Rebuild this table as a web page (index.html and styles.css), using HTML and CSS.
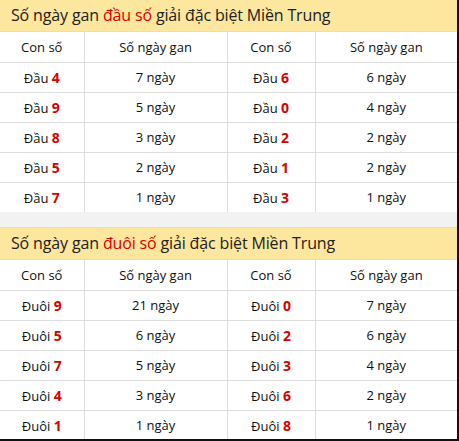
FILE: index.html
```html
<!DOCTYPE html>
<html lang="vi">
<head>
<meta charset="utf-8">
<link rel="stylesheet" href="styles.css">
</head>
<body>
<div class="wrap">
  <section class="block">
    <h2 class="title">Số ngày gan <span class="hl">đầu số</span> giải đặc biệt Miền Trung</h2>
    <table class="grid">
      <colgroup><col class="c1"><col class="c2"><col class="c3"><col class="c4"></colgroup>
      <tr class="head"><th>Con số</th><th>Số ngày gan</th><th>Con số</th><th>Số ngày gan</th></tr>
      <tr><td>Đầu <b>4</b></td><td>7 ngày</td><td>Đầu <b>6</b></td><td>6 ngày</td></tr>
      <tr><td>Đầu <b>9</b></td><td>5 ngày</td><td>Đầu <b>0</b></td><td>4 ngày</td></tr>
      <tr><td>Đầu <b>8</b></td><td>3 ngày</td><td>Đầu <b>2</b></td><td>2 ngày</td></tr>
      <tr><td>Đầu <b>5</b></td><td>2 ngày</td><td>Đầu <b>1</b></td><td>2 ngày</td></tr>
      <tr><td>Đầu <b>7</b></td><td>1 ngày</td><td>Đầu <b>3</b></td><td>1 ngày</td></tr>
    </table>
  </section>
  <div class="gap"></div>
  <section class="block">
    <h2 class="title">Số ngày gan <span class="hl">đuôi số</span> giải đặc biệt Miền Trung</h2>
    <table class="grid">
      <colgroup><col class="c1"><col class="c2"><col class="c3"><col class="c4"></colgroup>
      <tr class="head"><th>Con số</th><th>Số ngày gan</th><th>Con số</th><th>Số ngày gan</th></tr>
      <tr><td>Đuôi <b>9</b></td><td>21 ngày</td><td>Đuôi <b>0</b></td><td>7 ngày</td></tr>
      <tr><td>Đuôi <b>5</b></td><td>6 ngày</td><td>Đuôi <b>2</b></td><td>6 ngày</td></tr>
      <tr><td>Đuôi <b>7</b></td><td>5 ngày</td><td>Đuôi <b>3</b></td><td>4 ngày</td></tr>
      <tr><td>Đuôi <b>4</b></td><td>3 ngày</td><td>Đuôi <b>6</b></td><td>2 ngày</td></tr>
      <tr><td>Đuôi <b>1</b></td><td>1 ngày</td><td>Đuôi <b>8</b></td><td>1 ngày</td></tr>
    </table>
  </section>
</div>
</body>
</html>
```
FILE: styles.css
```css
* { box-sizing: border-box; }
html, body { margin: 0; padding: 0; background: #fff; }
body { font-family: "Open Sans", "Noto Sans", sans-serif; color: #111; }
.wrap {
  width: 459px;
  height: 441px;
  border-right: 2px solid #111;
  border-bottom: 2px solid #111;
  overflow: hidden;
}
.title {
  margin: 0;
  height: 32px;
  background: #fde69d;
  border-bottom: 1px solid #ddd;
  font-size: 16px;
  font-weight: 500;
  letter-spacing: -0.15px;
  line-height: 31px;
  padding-left: 11px;
  color: #222;
  white-space: nowrap;
}
.hl { color: #d90000; }
.grid {
  width: 457px;
  border-collapse: collapse;
  table-layout: fixed;
  font-size: 13px;
}
.c1 { width: 84px; }
.c2 { width: 143px; }
.c3 { width: 88px; }
.c4 { width: 142px; }
.grid th, .grid td {
  height: 30px;
  padding: 0;
  text-align: center;
  border-bottom: 1px solid #ddd;
  border-left: 1px solid #ddd;
  font-weight: 400;
  color: #111;
}
.grid th:first-child, .grid td:first-child { border-left: 0; }
.grid th { font-weight: 500; color: #111; }
.grid b { color: #d90000; font-weight: 700; font-size: 14px; }
.grid tr:last-child td { border-bottom: 0; }
.gap { height: 16px; background: #f2f2f2; border-bottom: 1px solid #ddd; }
```
